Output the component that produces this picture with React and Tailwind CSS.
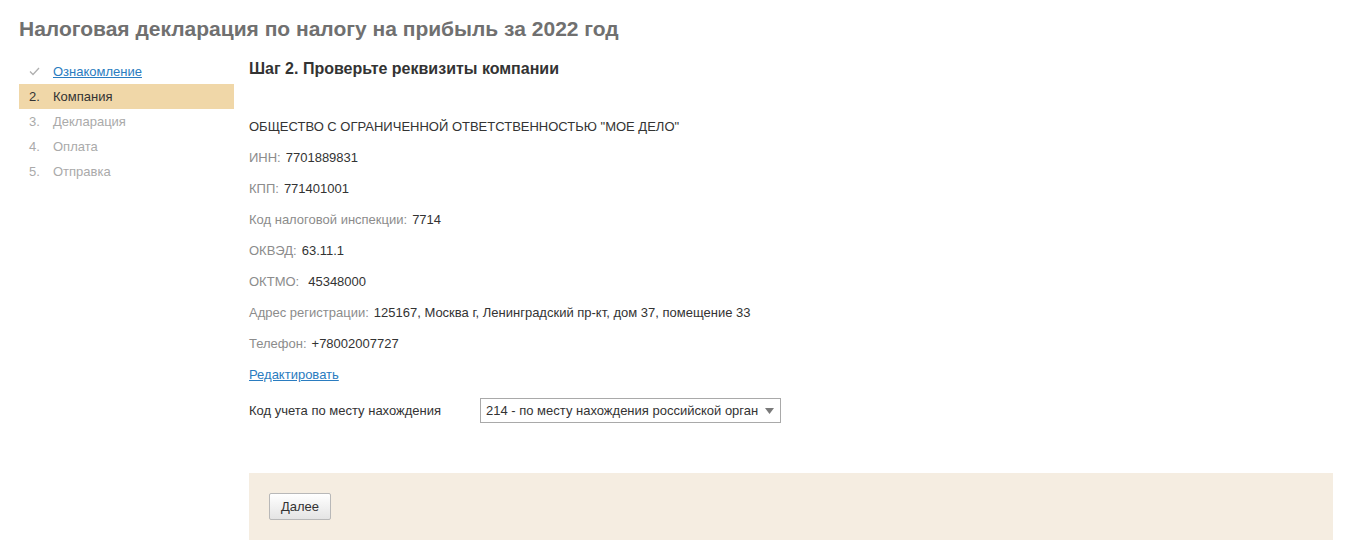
import React from 'react'

const steps = [
  { num: '2.', label: 'Компания', state: 'active' },
  { num: '3.', label: 'Декларация', state: 'todo' },
  { num: '4.', label: 'Оплата', state: 'todo' },
  { num: '5.', label: 'Отправка', state: 'todo' },
]

const fields = [
  { label: 'ИНН:', value: '7701889831' },
  { label: 'КПП:', value: '771401001' },
  { label: 'Код налоговой инспекции:', value: '7714' },
  { label: 'ОКВЭД:', value: '63.11.1' },
  { label: 'ОКТМО:', value: '45348000', wide: true },
  { label: 'Адрес регистрации:', value: '125167, Москва г, Ленинградский пр-кт, дом 37, помещение 33' },
  { label: 'Телефон:', value: '+78002007727' },
]

export default function App() {
  return (
    <div className="min-h-screen bg-white px-[19px] pt-[17px] text-[13px] text-[#333] font-['Liberation_Sans',Arial,sans-serif]">
      {/* Title */}
      <h1 className="text-[21px] leading-[24px] font-bold text-[#707070]">
        Налоговая декларация по налогу на прибыль за 2022 год
      </h1>

      <div className="flex mt-[18px] gap-[15px]">
        {/* Steps */}
        <ul className="w-[215px] shrink-0">
          <li className="h-[25px] flex items-center">
            <span className="w-[34px] pl-[10px] flex items-center">
              <svg width="11" height="9" viewBox="0 0 11 9" fill="none">
                <path d="M1 4.5 L4 7.5 L10 1" stroke="#b0b0b0" strokeWidth="1.3" />
              </svg>
            </span>
            <a href="#" className="text-[#2a7cc0] underline">Ознакомление</a>
          </li>
          {steps.map(s => (
            <li
              key={s.num}
              className={`h-[25px] flex items-center ${s.state === 'active' ? 'bg-[#f0d7a8] text-[#333]' : 'text-[#aaa]'}`}
            >
              <span className="w-[34px] pl-[10px]">{s.num}</span>
              <span>{s.label}</span>
            </li>
          ))}
        </ul>

        {/* Main */}
        <div className="flex-1">
          <h2 className="text-[16px] leading-[20px] font-bold text-[#333]">
            Шаг 2. Проверьте реквизиты компании
          </h2>

          <div className="mt-[32px]">
            <div className="h-[31px] flex items-center">ОБЩЕСТВО С ОГРАНИЧЕННОЙ ОТВЕТСТВЕННОСТЬЮ "МОЕ ДЕЛО"</div>
            {fields.map(f => (
              <div key={f.label} className="h-[31px] flex items-center">
                <span className="text-[#8c8c8c]">{f.label}</span>
                <span className={f.wide ? 'ml-[9px]' : 'ml-[5px]'}>{f.value}</span>
              </div>
            ))}
            <div className="h-[31px] flex items-center">
              <a href="#" className="text-[#2a7cc0] underline">Редактировать</a>
            </div>
          </div>

          <div className="mt-[8px] flex items-center h-[25px]">
            <span className="w-[231px]">Код учета по месту нахождения</span>
            <div className="w-[301px] h-[25px] border border-[#a9a9a9] flex items-center bg-white">
              <span className="flex-1 overflow-hidden whitespace-nowrap pl-[5px]">
                214 - по месту нахождения российской организации
              </span>
              <span className="w-[22px] flex justify-center">
                <svg width="9" height="6" viewBox="0 0 9 6">
                  <path d="M0 0 L9 0 L4.5 6 Z" fill="#7a7a7a" />
                </svg>
              </span>
            </div>
          </div>

          {/* Footer */}
          <div className="mt-[50px] h-[67px] bg-[#f5ede1] pl-[20px] pt-[20px]">
            <button className="w-[62px] h-[27px] border border-[#b8b8b8] rounded-[2px] bg-gradient-to-b from-white to-[#e4e4e4] text-[#333] text-[13px]">
              Далее
            </button>
          </div>
        </div>
      </div>
    </div>
  )
}
